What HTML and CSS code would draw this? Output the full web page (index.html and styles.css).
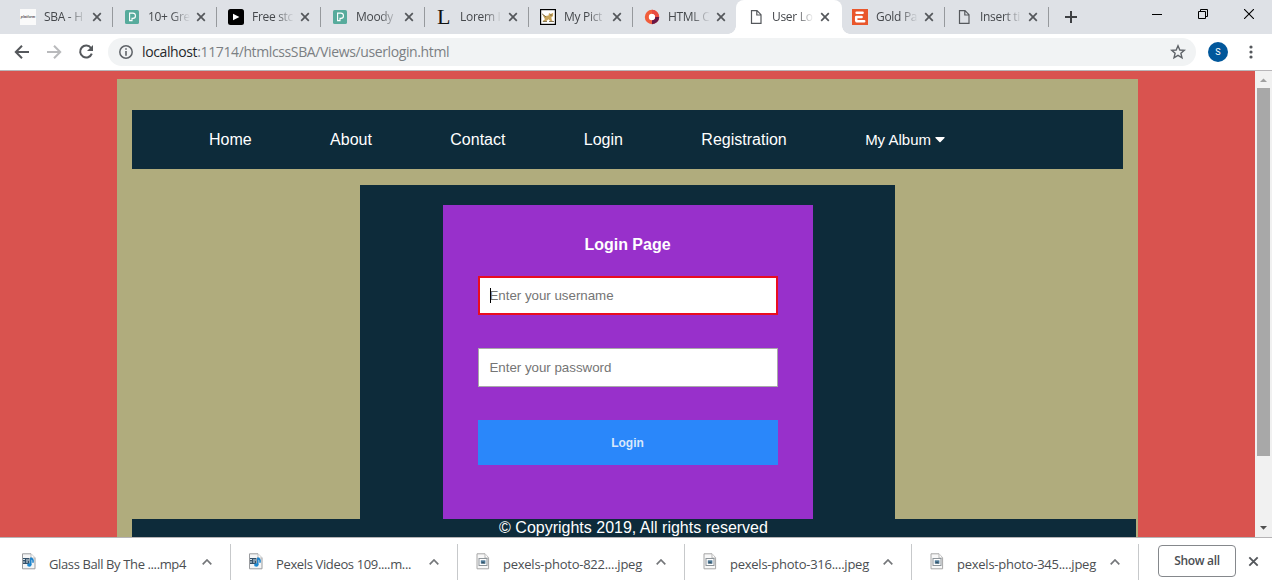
FILE: index.html
```
<!DOCTYPE html>
<html lang="en">
<head>
<meta charset="utf-8">
<title>User Login</title>
<link rel="stylesheet" href="styles.css">
</head>
<body>
<svg class="defs" width="0" height="0">
  <symbol id="close" viewBox="0 0 10 10"><path d="M1.2 1.2 8.8 8.8M8.8 1.2 1.2 8.8" stroke="#54575b" stroke-width="1.7" fill="none"/></symbol>
  <symbol id="pexels" viewBox="0 0 16 16"><rect x="1" y="1" width="14" height="14" rx="1.6" fill="#57ab9c"/><path d="M5.6 4.1H8.7A2.5 2.5 0 0 1 8.9 9.4H8V11.6H5.6Z" fill="none" stroke="#fff" stroke-width="1.1"/></symbol>
  <symbol id="page" viewBox="0 0 16 16"><path d="M3.5 1.7H9L13 5.7V14.3H3.5ZM8.8 1.7V6H13" fill="none" stroke="#55585c" stroke-width="1.2"/></symbol>
  <symbol id="up" viewBox="0 0 10 6"><path d="M.7 5.3 5 1 9.3 5.3" fill="none" stroke="#747679" stroke-width="1.7"/></symbol>
  <symbol id="video" viewBox="0 0 14 17"><path d="M.5.8H9L13 4.8V15.8H.5Z" fill="#f4f5f6" stroke="#9a9c9f"/><path d="M9 .8V5H13" fill="#fff" stroke="#b9bbbd"/><path d="M1 5H7.5V11H1Z" fill="#345069"/><path d="M1 6.5H3M1 9H3M4 7H7M4 9H6" stroke="#d7e4ec"/><path d="M8.8 4.5V12M8.8 5Q12 6.4 10.8 9.8" fill="none" stroke="#187fc9" stroke-width="1.5"/><ellipse cx="7.3" cy="12" rx="2.2" ry="1.7" fill="#1b88d1"/></symbol>
  <symbol id="image" viewBox="0 0 14 17"><path d="M1 .8H9L12.6 4.6V15.8H1Z" fill="#f8f8f8" stroke="#a6a6a6"/><path d="M9 .8V5H12.6" fill="#fff" stroke="#b8b8b8"/><rect x="3" y="5.5" width="8" height="7" fill="#fff" stroke="#8d9499"/><rect x="4.8" y="7.3" width="4.6" height="3.3" fill="#4d7896"/><path d="M5 10.3 7 8.7 9.4 10.5" fill="#314d5e"/></symbol>
</svg>

<div class="tabstrip">
  <div class="tab"><svg class="fav" viewBox="0 0 16 16"><rect width="16" height="16" fill="#fafafa"/><text x=".8" y="8.5" class="tiny">platform</text></svg><span class="title">SBA - H</span><svg class="x"><use href="#close"/></svg></div>
  <div class="tab"><svg class="fav"><use href="#pexels"/></svg><span class="title">10+ Gre</span><svg class="x"><use href="#close"/></svg></div>
  <div class="tab"><svg class="fav" viewBox="0 0 16 16"><rect width="16" height="16" rx="2.5"/><path d="M5 4.8 11.4 8 5 11.2Z" fill="#fff"/></svg><span class="title">Free stc</span><svg class="x"><use href="#close"/></svg></div>
  <div class="tab"><svg class="fav"><use href="#pexels"/></svg><span class="title">Moody</span><svg class="x"><use href="#close"/></svg></div>
  <div class="tab"><span class="fav letter">L</span><span class="title">Lorem I</span><svg class="x"><use href="#close"/></svg></div>
  <div class="tab"><svg class="fav" viewBox="0 0 16 16"><rect x=".6" y=".6" width="14.8" height="14.8" fill="#fff" stroke="#000" stroke-width="1.2"/><path d="M2.5 5.2 5.5 7 8.5 6.4 9 4 10.8 5 13.2 3.8 13 7 11.3 8.6 12 11.4 14 12.6 10.5 12.3 8.5 10.3 6 12.3 2 12.6 5 10.3 4 8.5Z" fill="#c9a55c"/><path d="M2 4.8 6 8M3 12.5H7M10 6H12M9 12.5H14" stroke="#695a38" stroke-width=".8"/></svg><span class="title">My Pict</span><svg class="x"><use href="#close"/></svg></div>
  <div class="tab last"><svg class="fav" viewBox="0 0 16 16"><circle cx="8" cy="8" r="5.2" fill="#fff" stroke="#f15d3b" stroke-width="4"/><path d="M13.2 8A5.2 5.2 0 0 1 8 13.2" fill="none" stroke="#681747" stroke-width="4"/><path d="M8 2.8A5.2 5.2 0 0 1 13.2 8" fill="none" stroke="#e94a40" stroke-width="4"/></svg><span class="title">HTML C</span><svg class="x"><use href="#close"/></svg></div>
  <div class="tab active"><svg class="fav"><use href="#page"/></svg><span class="title">User Lo</span><svg class="x"><use href="#close"/></svg></div>
  <div class="tab"><svg class="fav" viewBox="0 0 16 16"><rect width="16" height="16" fill="#e9562b"/><path d="M4.6 3.7H10.6M4.2 8H9.6M4.6 12.3H12.2M4.2 8V11.8" stroke="#fff" stroke-width="2.5" stroke-linecap="round" fill="none"/></svg><span class="title">Gold Pa</span><svg class="x"><use href="#close"/></svg></div>
  <div class="tab"><svg class="fav"><use href="#page"/></svg><span class="title">Insert ti</span><svg class="x"><use href="#close"/></svg></div>
  <svg class="plus" viewBox="0 0 12 12"><path d="M6 0V12M0 6H12" stroke="#3e4043" stroke-width="2"/></svg>
  <div class="window-controls">
    <svg width="10" height="10"><path d="M0 5.5H10" stroke="#000"/></svg>
    <svg width="10" height="10"><path d="M.5 2.5H7.5V9.5H.5ZM2.5 2.5V.5H9.5V7.5H7.5" fill="none" stroke="#000"/></svg>
    <svg width="10" height="10"><path d="M0 0 10 10M10 0 0 10" stroke="#000" stroke-width="1.1"/></svg>
  </div>
</div>

<div class="toolbar">
  <svg class="tool" viewBox="0 0 16 16"><path d="M15 8H2M8 1.8 1.8 8 8 14.2" fill="none" stroke="#55585c" stroke-width="2"/></svg>
  <svg class="tool" viewBox="0 0 16 16"><path d="M1 8H14M8 1.8 14.2 8 8 14.2" fill="none" stroke="#b9babc" stroke-width="2"/></svg>
  <svg class="tool" viewBox="0 0 16 16"><path d="M13 4A6 6 0 1 0 13.8 9.6" fill="none" stroke="#55585c" stroke-width="2"/><path d="M15 1V7H9Z" fill="#55585c"/></svg>
  <div class="address">
    <svg width="14" height="14" viewBox="0 0 14 14"><circle cx="7" cy="7" r="6.2" fill="none" stroke="#5f6368" stroke-width="1.5"/><path d="M7 3.2V4.8M7 6V10.8" stroke="#5f6368" stroke-width="1.6"/></svg>
    <span class="url"><b>localhost</b>:11714/htmlcssSBA/Views/userlogin.html</span>
    <svg class="star" width="16" height="16" viewBox="0 0 16 16"><path d="M8 1.8 9.8 6 14.3 6.3 10.9 9.3 12 13.8 8 11.4 4 13.8 5.1 9.3 1.7 6.3 6.2 6Z" fill="none" stroke="#5f6368" stroke-width="1.4"/></svg>
  </div>
  <div class="avatar">S</div>
  <svg class="more" width="4" height="14"><g fill="#55585c"><circle cx="2" cy="2" r="1.6"/><circle cx="2" cy="7" r="1.6"/><circle cx="2" cy="12" r="1.6"/></g></svg>
</div>

<div class="viewport">
  <div class="backdrop">
    <main class="container">
      <nav class="nav">
        <a>Home</a><a>About</a><a>Contact</a><a>Login</a><a>Registration</a>
        <a class="album">My Album <svg width="10" height="6"><path d="M.8 0H9.2Q10 .2 9.5.9L5.6 5Q5 5.7 4.4 5L.5.9Q0 .2.8 0Z" fill="#fff"/></svg></a>
      </nav>
      <section class="login">
        <form class="card">
          <h1>Login Page</h1>
          <div class="field focused"><i class="cursor"></i>Enter your username</div>
          <div class="field">Enter your password</div>
          <div class="submit">Login</div>
        </form>
      </section>
      <footer class="footer">© Copyrights 2019, All rights reserved</footer>
    </main>
  </div>
  <div class="scrollbar">
    <svg width="17" height="17"><path d="M5 11 8.5 7.5 12 11Z" fill="#a0a0a0"/></svg>
    <div class="thumb"></div>
    <svg width="17" height="17"><path d="M5 6H12L8.5 9.7Z" fill="#505050"/></svg>
  </div>
</div>

<div class="shelf">
  <div class="download"><svg class="file"><use href="#video"/></svg><span class="glass">Glass Ball By The ....mp4</span><svg class="up"><use href="#up"/></svg></div>
  <div class="download"><svg class="file"><use href="#video"/></svg><span class="videos">Pexels Videos 109....m...</span><svg class="up"><use href="#up"/></svg></div>
  <div class="download"><svg class="file"><use href="#image"/></svg><span>pexels-photo-822....jpeg</span><svg class="up"><use href="#up"/></svg></div>
  <div class="download"><svg class="file"><use href="#image"/></svg><span>pexels-photo-316....jpeg</span><svg class="up"><use href="#up"/></svg></div>
  <div class="download"><svg class="file"><use href="#image"/></svg><span>pexels-photo-345....jpeg</span><svg class="up"><use href="#up"/></svg></div>
  <div class="show-all">Show all</div>
  <svg class="dismiss"><use href="#close"/></svg>
</div>
</body>
</html>
```
FILE: styles.css
```
* { box-sizing: border-box; }
body { margin: 0; width: 1272px; height: 586px; overflow: hidden; display: flex; flex-direction: column; background: #fff; font-family: "Open Sans", "Noto Sans", sans-serif; }
svg { display: block; flex: none; }
.defs { display: none; }

.tabstrip { height: 34px; flex: none; display: flex; background: #dee1e6; padding-left: 9px; }
.tab { width: 104px; flex: none; height: 34px; display: flex; align-items: center; padding-left: 11px; background: linear-gradient(#96999d, #96999d) right 7px / 1px 20px no-repeat; }
.tab.last { background: none; }
.tab.active { position: relative; background: #fff; border-radius: 8px 8px 0 0; width: 106px; margin-left: -1px; margin-right: -1px; padding-left: 12px; }
.tab.active::before, .tab.active::after { content: ""; position: absolute; bottom: 0; width: 8px; height: 8px; }
.tab.active::before { left: -8px; background: radial-gradient(circle at 0 0, transparent 7.5px, #fff 8px); }
.tab.active::after { right: -8px; background: radial-gradient(circle at 100% 0, transparent 7.5px, #fff 8px); }
.fav { width: 16px; height: 16px; flex: none; }
.tiny { font: italic bold 3.6px "Liberation Sans", sans-serif; fill: #555; }
.letter { font: 22px/16px "Liberation Serif", serif; color: #111; padding-left: 1px; }
.title { width: 43px; margin-left: 8px; white-space: nowrap; font-size: 12px; line-height: 18px; color: #45484c; letter-spacing: -.3px; -webkit-mask-image: linear-gradient(90deg, #000 55%, transparent 98%); mask-image: linear-gradient(90deg, #000 55%, transparent 98%); }
.x { width: 10px; height: 10px; margin-left: 5px; }
.plus { width: 12px; height: 12px; margin: 11px 0 0 16px; }
.window-controls { display: flex; gap: 36px; margin: 9px 0 0 75px; }

.toolbar { height: 37px; flex: none; display: flex; align-items: center; padding-left: 14px; border-bottom: 1px solid #b8b6b9; }
.tool { width: 16px; height: 16px; margin-right: 16px; }
.address { width: 1088px; height: 28px; margin-left: -2px; flex: none; border-radius: 14px; background: #f1f3f4; display: flex; align-items: center; padding: 0 10px 0 11px; }
.url { margin-left: 9px; font-size: 14px; line-height: 20px; color: #7b7f83; letter-spacing: -.38px; white-space: nowrap; }
.url b { font-weight: 400; color: #25282b; }
.star { margin-left: auto; }
.avatar { width: 20px; height: 20px; margin-left: 12px; border-radius: 50%; background: #01579b; color: #fff; font: 9px/20px Roboto, sans-serif; text-align: center; }
.more { margin-left: 20.5px; }

.viewport { height: 466px; flex: none; display: flex; overflow: hidden; font-family: "Liberation Sans", Arial, sans-serif; }
.backdrop { width: 1255px; background: #d9534f; padding: 8px 117px 0; }
.container { width: 1021px; height: 458px; background: #b0ac7d; padding: 31px 15px 0; }
.nav { width: 991px; height: 59px; background: #0d2b3a; display: flex; align-items: center; gap: 78.4px; padding-left: 77px; color: #fff; font-size: 16px; white-space: nowrap; }
.album { display: flex; align-items: center; gap: 4px; font-size: 15px; }
.login { width: 535px; height: 334px; margin: 16px 0 0 228px; background: #0d2b3a; padding: 20px 82px 0 83px; }
.card { height: 314px; background: #9830cb; padding: 31px 35px 0; }
h1 { margin: 0 1px 22px 0; font-size: 16px; line-height: 18px; color: #fff; text-align: center; }
.field { position: relative; width: 300px; height: 39px; margin-bottom: 33px; border: 1px solid #a9a9a9; background: #fff; color: #757575; font-size: 13.333px; line-height: 37px; padding-left: 10.5px; letter-spacing: -.02px; }
.focused { border: 2px solid #e90d20; line-height: 35px; padding-left: 9.5px; }
.cursor { position: absolute; left: 10px; top: 10px; width: 1px; height: 15px; background: #000; }
.submit { height: 45px; background: #2a87fa; color: #d8e7fb; font-size: 12px; line-height: 46px; font-weight: 700; text-align: center; padding-right: 1px; }
.footer { width: 1004px; height: 18px; background: #0d2b3a; color: #fff; font-size: 16px; line-height: 18px; text-align: center; padding-right: 1px; }
.scrollbar { width: 17px; background: #f1f1f1; }
.thumb { width: 13px; height: 368px; margin: 0 2px 64px; background: #a8a8a8; }

.shelf { height: 49px; flex: none; border-top: 1px solid #b6b4b6; display: flex; background: #fff; padding-left: 4px; }
.download { width: 227px; flex: none; height: 48px; display: flex; align-items: center; padding-left: 18px; background: linear-gradient(#c7c9cb, #c7c9cb) right 6px / 1px 36px no-repeat; }
.file { width: 14px; height: 17px; margin-bottom: 1px; }
.download span { width: 148px; margin: 4px 0 0 13px; font-size: 13px; line-height: 20px; color: #4b4e52; letter-spacing: -.25px; white-space: nowrap; }
.download .glass { letter-spacing: -.38px; }
.download .videos { letter-spacing: -.36px; }
.up { width: 10px; height: 6px; margin-left: 5px; }
.show-all { width: 78px; height: 32px; margin: 7px 0 0 19px; border: 1px solid #85888c; border-radius: 4px; font-size: 12px; line-height: 30px; font-weight: 600; color: #4b4e52; text-align: center; letter-spacing: -.3px; }
.dismiss { width: 11px; height: 11px; margin: 18px 0 0 12px; }
```
